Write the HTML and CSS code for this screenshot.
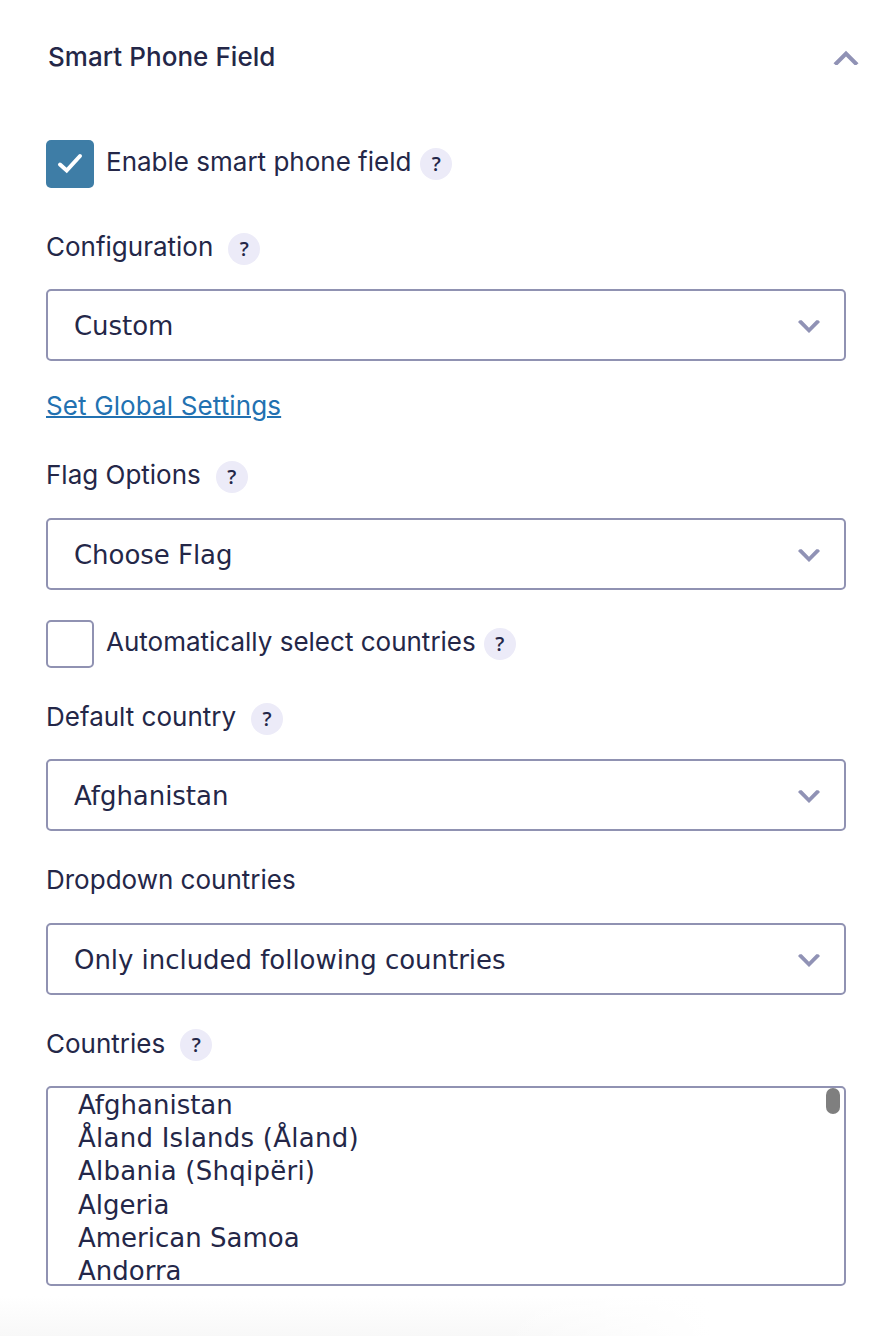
FILE: index.html
```html
<!DOCTYPE html>
<html lang="en">
<head>
<meta charset="utf-8">
<title>Smart Phone Field</title>
<link rel="stylesheet" href="styles.css">
</head>
<body>
<main class="panel">
  <header class="head"><h1>Smart Phone Field</h1>
    <svg class="up" viewBox="0 0 26 16"><path d="M13 .8 25.500 13.300 23.500 15H21.500L13 6.500 4.500 15H2.500L.5 13.300z"/></svg></header>
  <div class="check first"><span class="box on"><svg viewBox="0 0 48 48"><path d="m14 24.500 6.700 6L34 16"/></svg></span><span class="label">Enable smart phone field</span><span class="help">?</span></div>
  <div class="row r1"><span class="label">Configuration</span><span class="help">?</span></div>
  <div class="select s1"><span>Custom</span><svg class="down" viewBox="0 0 22 14"><path d="M0 2 1.700.3H3.700L11 7.700 18.300.3h2L22 2 11 13z"/></svg></div>
  <a class="link">Set Global Settings</a>
  <div class="row r2"><span class="label">Flag Options</span><span class="help">?</span></div>
  <div class="select s2"><span>Choose Flag</span><svg class="down" viewBox="0 0 22 14"><path d="M0 2 1.700.3H3.700L11 7.700 18.300.3h2L22 2 11 13z"/></svg></div>
  <div class="check second"><span class="box"></span><span class="label">Automatically select countries</span><span class="help">?</span></div>
  <div class="row r3"><span class="label">Default country</span><span class="help">?</span></div>
  <div class="select s3"><span>Afghanistan</span><svg class="down" viewBox="0 0 22 14"><path d="M0 2 1.700.3H3.700L11 7.700 18.300.3h2L22 2 11 13z"/></svg></div>
  <div class="row r4"><span class="label">Dropdown countries</span></div>
  <div class="select s4"><span>Only included following countries</span><svg class="down" viewBox="0 0 22 14"><path d="M0 2 1.700.3H3.700L11 7.700 18.300.3h2L22 2 11 13z"/></svg></div>
  <div class="row r5"><span class="label">Countries</span><span class="help">?</span></div>
  <div class="list"><ul><li>Afghanistan</li><li class="wide">Åland Islands (Åland)</li><li class="wide">Albania (Shqipëri)</li><li>Algeria</li><li>American Samoa</li><li>Andorra</li></ul><span class="thumb"></span></div>
</main>
<div class="shade"></div>
</body>
</html>
```
FILE: styles.css
```css
* { box-sizing: border-box; }
body { margin: 0; height: 1336px; overflow: hidden; background: #fff; color: #242748; font-family: Inter, sans-serif; font-size: 26px; display: flex; flex-direction: column; }
.panel { width: 886px; height: 1296px; flex-shrink: 0; padding: 0 40px 0 46px; display: flex; flex-direction: column; }
.panel > * { flex-shrink: 0; }
.head { height: 40px; margin: 37px -13px 63px 2px; display: flex; justify-content: space-between; align-items: center; }
h1 { margin: 0; font-size: 26px; font-weight: 500; line-height: 40px; letter-spacing: 0.05px; }
svg { fill: #9092b5; }
.up { width: 26px; height: 16px; margin-top: 2px; }
.down { width: 22px; height: 14px; margin-top: 4px; }
.check { height: 48px; display: flex; align-items: center; }
.box { width: 48px; height: 48px; margin-right: 12px; border: 2px solid #9092b2; border-radius: 5px; }
.box.on { border: 0; background: #3e7da6; }
.box svg { display: block; width: 48px; height: 48px; fill: none; stroke: #fff; stroke-width: 4; stroke-linecap: round; }
.label { line-height: 32px; white-space: nowrap; }
.check .label, .row .label { margin-top: -5px; }
.row.r5 .label { margin-top: -3px; }
.help { width: 32px; height: 32px; border-radius: 50%; background: #ecebf8; margin-left: 15px; font-family: "Open Sans", sans-serif; font-size: 20px; font-weight: 600; line-height: 32px; text-align: center; }
.check .help { margin-left: 9px; }
.second .help { margin-left: 8px; }
.row { height: 32px; display: flex; align-items: center; }
.r1 { margin-top: 45px; }
.select { height: 72px; border: 2px solid #9092b2; border-radius: 5px; padding: 0 24px 0 26px; display: flex; align-items: center; justify-content: space-between; font-family: "DejaVu Sans", sans-serif; font-size: 26px; letter-spacing: -0.04px; }
.select span { padding-top: 2px; }
.s1 { margin-top: 24px; }
.link { color: #2271b1; letter-spacing: 0.12px; text-decoration: underline; text-decoration-thickness: 2px; line-height: 32px; margin-top: 29px; align-self: flex-start; }
.r2 { margin-top: 39px; }
.s2 { margin-top: 25px; }
.second { margin-top: 30px; }
.r3 { margin-top: 35px; }
.s3 { margin-top: 24px; }
.r4 { margin-top: 35px; }
.s4 { margin-top: 25px; }
.r5 { margin-top: 34px; }
.list { height: 200px; margin-top: 25px; border: 2px solid #9092b2; border-radius: 5px; overflow: hidden; display: flex; justify-content: space-between; font-family: "DejaVu Sans", sans-serif; font-size: 26px; }
ul { list-style: none; margin: 0; padding: 1px 0 0 30px; line-height: 33.2px; }
.wide { letter-spacing: 0.25px; }
.thumb { width: 14px; height: 26px; border-radius: 7px; background: #7f7f7f; margin-right: 4px; }
.shade { height: 40px; background: linear-gradient(to right, transparent 500px, #fff 710px), linear-gradient(#fff, #f8f8f8); }
```
